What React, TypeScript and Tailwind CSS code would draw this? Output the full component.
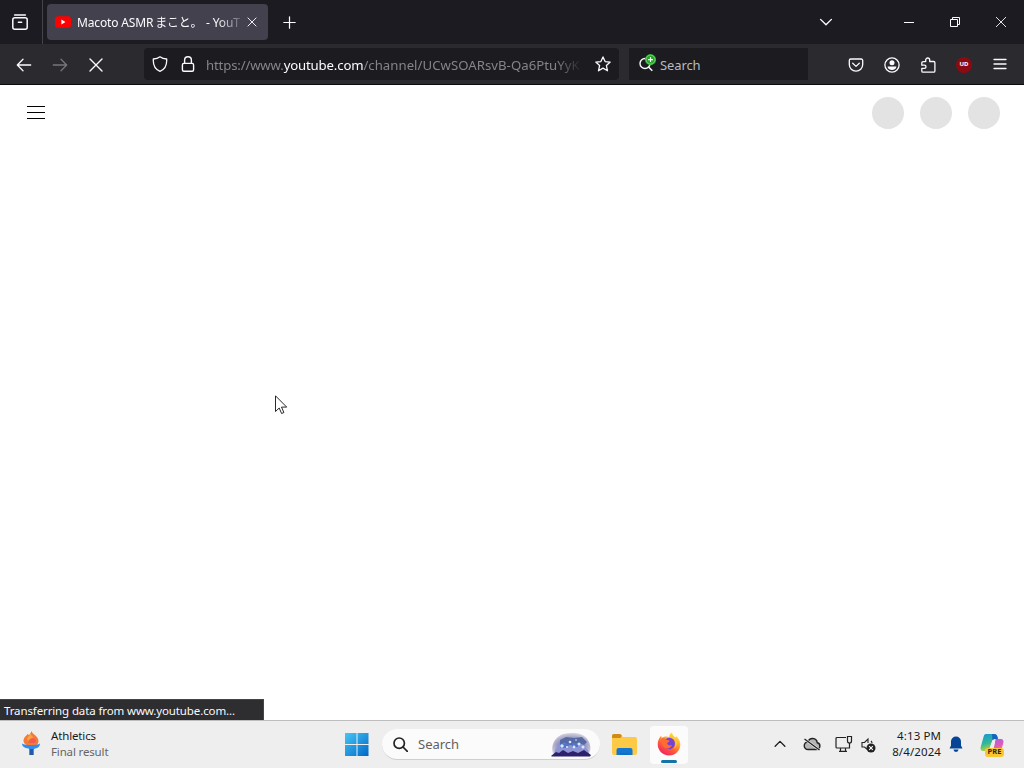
import type { ReactNode } from 'react';

interface IconProps {
  size?: number;
  children: ReactNode;
  className?: string;
  width?: number;
}

// Shared stroke icon, drawn on a 16px grid
function Icon({ size = 16, width = 1.3, className = '', children }: IconProps) {
  return (
    <svg
      width={size}
      height={size}
      viewBox="0 0 16 16"
      fill="none"
      stroke="currentColor"
      strokeWidth={width}
      strokeLinecap="round"
      strokeLinejoin="round"
      className={`shrink-0 ${className}`}
    >
      {children}
    </svg>
  );
}

function TabBar() {
  return (
    <div className="flex h-11 items-center bg-[#1c1b22] text-[#fbfbfe]">
      <div className="flex h-full w-[43px] items-center border-r border-[#45444e] pl-3">
        <Icon width={1.5}>
          <path d="M2.6 1h10.8" />
          <rect x="0.8" y="3.8" width="14.4" height="11.4" rx="2" />
          <path d="M6.4 8.2h3.2" />
        </Icon>
      </div>
      <div className="ml-1 flex h-9 w-[221px] items-center rounded bg-[#42414d] pl-2">
        <svg width="16" height="16" viewBox="0 0 16 16" className="shrink-0">
          <rect y="2.2" width="16" height="11.6" rx="3" fill="#f00" />
          <path d="M6.4 5.6v4.8L10.5 8z" fill="#fff" />
        </svg>
        <div className="ml-1.5 w-[164px] whitespace-pre pt-0.5 text-[12px] tracking-[-0.15px] [mask-image:linear-gradient(to_right,#000_140px,transparent_170px)]">
          Macoto ASMR<span className="ml-[2px] mr-px tracking-[-0.3px]">まこと。</span> - YouT
        </div>
        <Icon size={10} width={1.5} className="ml-1.5">
          <path d="M1.5 1.5l13 13M14.5 1.5l-13 13" />
        </Icon>
      </div>
      <Icon size={13} width={1.5} className="ml-[15px] mt-px">
        <path d="M8 1v14M1 8h14" />
      </Icon>
      <Icon size={14} width={1.6} className="ml-auto">
        <path d="M1.8 5L8 11.2 14.2 5" />
      </Icon>
      <div className="ml-[53px] flex w-[138px] items-center">
        <div className="flex w-[46px] justify-center">
          <div className="h-px w-[10px] bg-[#fbfbfe]" />
        </div>
        <svg width="46" height="12" viewBox="0 0 46 12" fill="none" stroke="#fbfbfe">
          <path d="M18.5 3.5h7v7h-7zM20.5 3.5v-2h7v7h-2" />
        </svg>
        <svg width="46" height="12" viewBox="0 0 46 12" fill="none" stroke="#fbfbfe" strokeWidth="0.9">
          <path d="M18 1l10 10M28 1L18 11" />
        </svg>
      </div>
    </div>
  );
}

function NavBar() {
  return (
    <div className="flex h-[41px] items-center border-b border-[#0c0c0d] bg-[#2b2a2f] pl-4 text-[#fbfbfe]">
      <Icon width={1.3} className="mt-px">
        <path d="M14.7 8H1.5M7 2.3L1.3 8 7 13.7" />
      </Icon>
      <Icon width={1.3} className="ml-5 mt-px text-[#77767c]">
        <path d="M1.3 8h13.2M9 2.3L14.7 8 9 13.7" />
      </Icon>
      <Icon width={1.4} className="ml-5 mt-px">
        <path d="M2 2l12 12M14 2L2 14" />
      </Icon>
      <div className="ml-10 flex h-8 w-[475px] items-center rounded bg-[#1c1b20] pl-2">
        <Icon width={1.3}>
          <path d="M8 .8c1.8 1.4 4.2 2.1 6.7 2.2.3 5.4-1.3 10.3-6.7 12.3C2.6 13.3 1 8.4 1.3 3 3.8 2.9 6.2 2.2 8 .8z" />
        </Icon>
        <Icon width={1.4} className="ml-3">
          <rect x="2.4" y="7.4" width="11.2" height="7.8" rx="1.5" />
          <path d="M4.6 7.2V4.2a3.4 3.4 0 016.8 0v3" />
        </Icon>
        <div className="ml-[10px] w-[375px] whitespace-nowrap pt-[3px] text-[13.2px] tracking-[-0.16px] text-[#85848a] [mask-image:linear-gradient(to_right,#000_350px,transparent_377px)]">
          https://www.<span className="text-[#fbfbfe]">youtube.com</span>
          <span className="tracking-[0.03px]">/channel/UCwSOARsvB-Qa6PtuYyK</span>
        </div>
        <Icon width={1.3} className="ml-[14px]">
          <path d="M8 .9l2.1 4.7 5.1.5-3.8 3.5 1.1 5.2L8 12.1l-4.5 2.7 1.1-5.2L.8 6.1l5.1-.5z" />
        </Icon>
      </div>
      <div className="ml-[10px] flex h-8 w-[179px] items-center bg-[#1c1b20] pl-2">
        <svg width="18" height="20" viewBox="0 0 18 20" fill="none" className="-mt-px ml-px shrink-0">
          <circle cx="7" cy="9.5" r="5" stroke="#fbfbfe" strokeWidth="1.4" />
          <path d="M10.5 13l3.8 3.8" stroke="#fbfbfe" strokeWidth="1.5" />
          <circle cx="12.5" cy="5.600" r="5.6" fill="#25a62b" />
          <circle cx="12.5" cy="5.600" r="4.5" stroke="#b1e6a9" strokeWidth="0.6" />
          <path d="M12.5 3.100v5M10 5.600h5" stroke="#fff" strokeWidth="1.1" />
        </svg>
        <span className="ml-1 pt-[3px] text-[13px] tracking-[-0.1px] text-[#b9b9bf]">Search</span>
      </div>
      <div className="ml-auto mt-px flex gap-5 pr-4">
        <Icon width={1.3}>
          <path d="M2.8 2h10.4a1.5 1.5 0 011.5 1.5v4a6.7 6.7 0 01-13.4 0v-4A1.500 1.5 0 012.8 2z" />
          <path d="M4.7 6.3L8 9.4l3.3-3.1" />
        </Icon>
        <Icon width={1.3}>
          <circle cx="8" cy="8" r="7.1" />
          <circle cx="8" cy="5.8" r="2.5" fill="currentColor" stroke="none" />
          <path d="M3.6 9.4h8.800c0 2-2 3.5-4.4 3.5s-4.4-1.5-4.4-3.5z" fill="currentColor" stroke="none" />
        </Icon>
        <Icon width={1.3}>
          <path d="M5.7 4.2V3a2 2 0 014 0v1.500h4a1.2 1.2 0 011.2 1.2v8.3a1.2 1.2 0 01-1.2 1.2H3a1.200 1.2 0 01-1.2-1.2v-2.600h2.600a1.500 1.5 0 000-3.200H1.800V6a1.4 1.4 0 011.4-1.400h2.500z" />
        </Icon>
        <div className="flex size-4 items-center justify-center rounded-full bg-[#8c0a12] text-[6px] font-bold text-white">
          UD
        </div>
        <Icon width={1.3} className="-mt-px">
          <path d="M2 3.500h12M2 8h12M2 12.500h12" />
        </Icon>
      </div>
    </div>
  );
}

function Page() {
  return (
    <div className="relative flex-1 bg-white">
      <div className="flex items-start justify-between pl-[27px] pr-6 pt-3">
        <div className="flex h-8 flex-col justify-center gap-[5px] pb-px">
          <div className="h-px w-[18px] bg-black" />
          <div className="h-px w-[18px] bg-black" />
          <div className="h-px w-[18px] bg-black" />
        </div>
        <div className="flex gap-4">
          <div className="size-8 rounded-full bg-[#e3e3e3]" />
          <div className="size-8 rounded-full bg-[#e3e3e3]" />
          <div className="size-8 rounded-full bg-[#e3e3e3]" />
        </div>
      </div>
      <svg width="13" height="20" viewBox="0 0 13 20" className="absolute left-[275px] top-[310px]">
        <path
          d="M.5.8v15.700l3.700-3.500 2.400 5.500 2.300-1-2.400-5.400h5.200z"
          fill="#fff"
          stroke="#111"
          strokeWidth="0.9"
        />
      </svg>
      <div className="absolute bottom-0 left-0 flex h-[21px] w-[264px] items-center border-r border-t border-[#45444a] bg-[#2e2d30] pl-1 pt-0.5 text-[11.5px] tracking-[-0.12px] text-[#fbfbfe]">
        Transferring data from www.youtube.com...
      </div>
    </div>
  );
}

function SearchScene() {
  return (
    <svg width="41" height="25" viewBox="0 0 41 25">
      <defs>
        <radialGradient id="sky" cx=".5" cy=".6" r=".6">
          <stop stopColor="#4f76d2" />
          <stop offset=".5" stopColor="#8588be" />
          <stop offset="1" stopColor="#dcd7de" />
        </radialGradient>
      </defs>
      <path d="M2 22C-1 12 5 5 12 2c9-2 20-2 25 6 3 5 3 10 1 14z" fill="url(#sky)" />
      <path d="M9 8l6-3 8 1 8-1 5 5-3 3-5-2-8 2-7-2-4 2z" fill="#566aa5" />
      <path d="M4 18l5-6 6 3 5-2 6 2 5-3 6 6 1 4H3z" fill="#8d94d4" />
      <path d="M9 12h8v4H9zM21 11h6v4h-6z" fill="#5373cd" />
      <g fill="#d7eaff">
        <circle cx="11" cy="14" r="1.700" />
        <circle cx="19" cy="10" r="1.300" />
        <circle cx="23" cy="15" r="1.400" />
        <circle cx="28" cy="12" r="1.500" />
        <circle cx="32" cy="15" r="1.500" />
        <circle cx="16" cy="15" r="1.100" />
        <circle cx="25" cy="8" r=".8" />
      </g>
      <path d="M0 24l5-4 3 1 4-3 5 3 5-2 5 2 6-3 7 5-1 1.500H1z" fill="#2d216b" />
    </svg>
  );
}

function FirefoxLogo() {
  return (
    <svg width="24" height="24" viewBox="0 0 24 24">
      <defs>
        <linearGradient id="flame" x1=".85" y1="0" x2=".25" y2="1">
          <stop stopColor="#fff04a" />
          <stop offset=".35" stopColor="#ffb02e" />
          <stop offset=".65" stopColor="#ff5a3a" />
          <stop offset="1" stopColor="#ee1e65" />
        </linearGradient>
      </defs>
      <path
        d="M15 .5c.4 2.5 2 3.800 3.600 5.200l.3-1.700C21.500 6 23.300 9.200 23.300 12.500 23.300 18.800 18.300 23.500 12 23.500S.7 18.500.7 12.300C.7 9 2 6.100 4.200 3.800l.5 2.100C7.300 4.300 10 4.200 12.300 5c0-2 1-3.600 2.700-4.500z"
        fill="url(#flame)"
      />
      <circle cx="12.300" cy="11.500" r="5.700" fill="#7542d6" />
      <path d="M4.500 6.500c2-.6 4 .1 5.500 1.500 1.300 0 2.300.3 2.500.9-.5 1.200-1.800 1.500-2.500 2.200.4 2 2.500 3 5 2-1 3-4.500 4.500-7.500 2.500C4.500 13.500 3.500 9.500 4.500 6.500z" fill="#ff6c33" />
      <path d="M13.500 5.500c3.500.3 5.400 3 5 6.500 0 2-.8 3.500-1.800 4.700 3-1 4.300-6 2-9.200C17 5.500 15.500 5 13.500 5.500z" fill="#ffc83a" />
    </svg>
  );
}

function Taskbar() {
  return (
    <div className="flex h-12 items-center border-t border-[#bdbdbd] bg-[#eeeeee] text-[#1a1a1a]">
      <svg width="20" height="26" viewBox="0 0 20 26" className="-mt-1 ml-[21px]">
        <path d="M10.500 1c.5 3 7 5 7 10 0 3-2 5-6.500 5s-8.500-2-8.500-5C2.500 7 5.500 6 6.500 4L8 5C9 4.500 9.500 3 10.500 1z" fill="#f47b35" />
        <path d="M9.500 3c.5 3 3.500 4 3 6-1 3-6 3-6.500 0 0-2 3-3 3.500-6z" fill="#faa33f" />
        <path d="M11 8c3 0 5 2 3 5H8c-1-2 0-4 3-5z" fill="#f15c4e" />
        <path d="M1 13.500c2 1.500 5 1.500 9 1.500s7 0 9-1.500c0 3-2 4.500-5 5L12.500 19.500V25h-4v-5.500l-1-1c-4-.5-6.500-2-6.500-5z" fill="#2f8df0" />
        <path d="M8.500 19h4v6h-4z" fill="#2459ad" />
      </svg>
      <div className="-mt-0.5 ml-[10px] w-[293px] text-[11.5px] leading-4 tracking-[-0.15px]">
        <div>Athletics</div>
        <div className="text-[#666]">Final result</div>
      </div>
      <svg width="24" height="24" viewBox="0 0 24 24" className="-mt-px ml-px">
        <defs>
          <linearGradient id="win" x2="1" y2="1">
            <stop stopColor="#45c7f4" />
            <stop offset="1" stopColor="#0067c8" />
          </linearGradient>
        </defs>
        <path d="M0 1h11.500v11H0zM12.500 1h11v11h-11zM0 13h11.500v11H0zM12.500 13h11v11h-11z" fill="url(#win)" />
      </svg>
      <div className="ml-[13px] flex h-[31px] w-[218px] items-center rounded-full border-b border-[#cfcfcf] bg-[#fbfbfb] pl-[11px]">
        <svg width="15" height="15" viewBox="0 0 15 15" fill="none" stroke="#222" strokeWidth="1.700">
          <circle cx="6.200" cy="6.200" r="5.200" />
          <path d="M10 10l4.300 4.300" strokeLinecap="round" />
        </svg>
        <span className="ml-[10px] w-[133px] pt-px text-[13px] text-[#606060]">Search</span>
        <SearchScene />
      </div>
      <svg width="25" height="23" viewBox="0 0 25 23" className="-mt-px ml-[12px]">
        <path d="M0 3a2 2 0 012-2h6l3 3h12a2 2 0 012 2v14a2 2 0 01-2 2H2a2 2 0 01-2-2z" fill="#fcca45" />
        <path d="M0 3a2 2 0 012-2h6l2 1.500L8.500 5H0z" fill="#d08a16" />
        <path d="M4.500 22v-5a2 2 0 012-2h12a2 2 0 012 2v5z" fill="#1477cf" />
        <path d="M8 22v-2h9v2z" fill="#0f6fc2" />
      </svg>
      <div className="ml-[13px] flex h-[38px] w-[38px] flex-col items-center rounded bg-[#fbfbfb] pt-[6px]">
        <FirefoxLogo />
        <div className="mt-[4px] h-[3px] w-4 rounded-full bg-[#1474a8]" />
      </div>
      <div className="ml-auto flex items-center">
        <Icon size={12} width={1.7} className="-mt-0.5">
          <path d="M1.500 11L8 4.500l6.500 6.500" />
        </Icon>
        <svg width="18" height="16" viewBox="0 0 18 16" fill="none" stroke="#222" strokeWidth="1.400" className="ml-[17px] -mt-px">
          <path d="M5 13.500h8.500a3.400 3.400 0 00.8-6.700C13.500 1.500 6.500 1 5 6a3.700 3.700 0 000 7.500z" fill="#b5b5b5" />
          <path d="M1.500 3l15 11" stroke="#eee" strokeWidth="2.600" />
          <path d="M1.500 3l15 11" />
        </svg>
        <svg width="18" height="18" viewBox="0 0 18 18" fill="none" stroke="#222" strokeWidth="1.200" className="-mt-px ml-[14px]">
          <path d="M11 2.500H2a1 1 0 00-1 1V12a1 1 0 001 1h12.500V8M5.500 13v3.400M10.500 13v3.400M4 16.400h8M12.500 1.500h4V6a2 2 0 01-4 0zM14.500 8v5" />
        </svg>
        <svg width="15" height="16" viewBox="0 0 15 16" fill="none" stroke="#222" strokeWidth="1.100" className="ml-2">
          <path d="M6.500 12.500l-3-2.500H1V5.500h2.500L7 2v4M10 4q1 1 1 2" />
          <circle cx="10" cy="11" r="4.500" fill="#222" stroke="none" />
          <path d="M8.200 9.200l3.600 3.600M11.800 9.200l-3.600 3.600" stroke="#fff" />
        </svg>
        <div className="-mt-0.5 ml-[11px] w-[54px] whitespace-nowrap text-right text-[11.5px] leading-4 tracking-[0.1px]">
          <div>4:13 PM</div>
          <div>8/4/2024</div>
        </div>
        <svg width="14" height="16" viewBox="0 0 14 16" fill="#064596" className="-mt-px ml-2">
          <path d="M7 .5a5 5 0 00-5 5v4L.5 12.500h13L12 9.500v-4a5 5 0 00-5-5zM4.500 13.500h5a2.500 2.500 0 01-5 0z" />
        </svg>
        <div className="relative ml-[17px] mr-5 h-6 w-6">
          <svg width="24" height="24" viewBox="0 0 24 24">
            <defs>
              <linearGradient id="copA" x2=".3" y2="1">
                <stop stopColor="#1596d6" />
                <stop offset=".6" stopColor="#35b896" />
                <stop offset="1" stopColor="#b6d342" />
              </linearGradient>
              <linearGradient id="copB" x2=".3" y2="1">
                <stop stopColor="#9b65e8" />
                <stop offset=".6" stopColor="#e65bb5" />
                <stop offset="1" stopColor="#f79b55" />
              </linearGradient>
            </defs>
            <path d="M6 1h8c2 0 3 1 3.500 3l.5 2h-3c-2 0-2.500 1-3 3l-2 6c-.5 2-1.500 3-3.500 3H3c-2 0-3-2-2.300-4L3.500 4C4 2 4.500 1 6 1z" fill="url(#copA)" />
            <path d="M12 1h2c2 0 3 1 3.500 3l.5 2h-3c-1 0-2 .3-2.500 2z" fill="#1764bc" />
            <path d="M16 6h5c2 0 3 2 2.300 4L21 18c-.6 2-1.500 3-3.500 3H10c2 0 2.500-1 3-3l2-8c.3-2-.3-4 1-4z" fill="url(#copB)" />
            <path d="M12.500 7h3L12 15.500H9.500z" fill="#eee" />
          </svg>
          <div className="absolute left-[5px] top-[15px] flex h-[9px] w-[19px] items-center justify-center rounded-[3px] bg-[#fbc634] text-[7.5px] font-bold text-[#30240a]">
            PRE
          </div>
        </div>
      </div>
    </div>
  );
}

export default function App() {
  return (
    <div className="flex h-[768px] w-[1024px] flex-col overflow-hidden font-['Noto_Sans','Noto_Sans_CJK_JP',sans-serif]">
      <TabBar />
      <NavBar />
      <Page />
      <Taskbar />
    </div>
  );
}
